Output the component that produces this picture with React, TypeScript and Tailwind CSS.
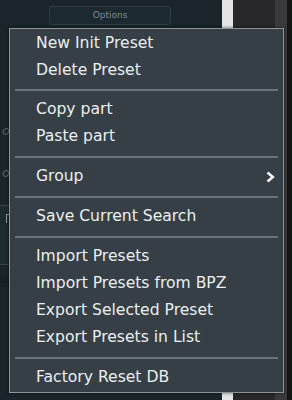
import { Fragment } from 'react';

type Entry = { label: string; submenu?: boolean } | 'sep';

const entries: Entry[] = [
  { label: 'New Init Preset' },
  { label: 'Delete Preset' },
  'sep',
  { label: 'Copy part' },
  { label: 'Paste part' },
  'sep',
  { label: 'Group', submenu: true },
  'sep',
  { label: 'Save Current Search' },
  'sep',
  { label: 'Import Presets' },
  { label: 'Import Presets from BPZ' },
  { label: 'Export Selected Preset' },
  { label: 'Export Presets in List' },
  'sep',
  { label: 'Factory Reset DB' },
];

const Chevron = () => (
  <svg width="9" height="12" viewBox="0 0 9 12" fill="none">
    <polyline points="1.5,1.5 6.8,6 1.5,10.5" stroke="#f2f4f5" strokeWidth="2.6" />
  </svg>
);

const ContextMenu = () => (
  <div className="absolute left-[9px] top-[28px] w-[275px] border border-[#8d9599] bg-[#353f45] pt-[1px] pb-[1px] shadow-[0_0_3px_rgba(0,0,0,0.6)]">
    {entries.map((e, i) =>
      e === 'sep' ? (
        <div key={i} className="px-[5px] py-[5.4px]">
          <div className="h-[2px] bg-[#697378]" />
        </div>
      ) : (
        <div
          key={i}
          className="flex h-[27px] items-center justify-between pl-[26px] pr-[8px] text-[15.6px] leading-none text-[#eceff0]"
        >
          <span>{e.label}</span>
          {e.submenu && <Chevron />}
        </div>
      ),
    )}
  </div>
);

const App = () => {
  return (
    <div
      className="relative flex h-[400px] w-[292px] overflow-hidden bg-[#1a262b]"
      style={{ fontFamily: '"DejaVu Sans", Verdana, sans-serif' }}
    >
      <section className="flex w-[222px] flex-col bg-[#19252a]">
        <div className="pl-[49px] pt-[6px]">
          <button className="flex h-[19px] w-[122px] items-center justify-center rounded-[3px] border border-[#2f3c41] bg-[#1c292e] text-[9px] text-[#7f8b90]">
            Options
          </button>
        </div>

        <div className="mt-[103px] flex flex-col gap-[35px] pl-[3px]">
          <div className="h-[7px] w-[6px] rotate-45 rounded-sm border border-[#5d686c]" />
          <div className="h-[7px] w-[6px] rotate-45 rounded-sm border border-[#5d686c]" />
        </div>

        <div className="mt-[28px] h-[60px] w-[10px] border border-l-0 border-[#34424a] bg-[#1d2a2f] pt-[8px] pl-[6px]">
          <div className="h-[9px] w-[3px] border-l border-t border-[#8c979b]" />
        </div>
        <div className="mt-[12px] h-[10px] w-full bg-[#162126]" />
      </section>

      <div className="w-[11px] bg-[#e4e5e6]" />
      <div className="w-[42px] bg-[#28282a]" />
      <div className="w-[12px] bg-[#3a3a3c]" />
      <div className="flex-1 bg-[#141414]" />

      <ContextMenu />
    </div>
  );
};

export default App;
